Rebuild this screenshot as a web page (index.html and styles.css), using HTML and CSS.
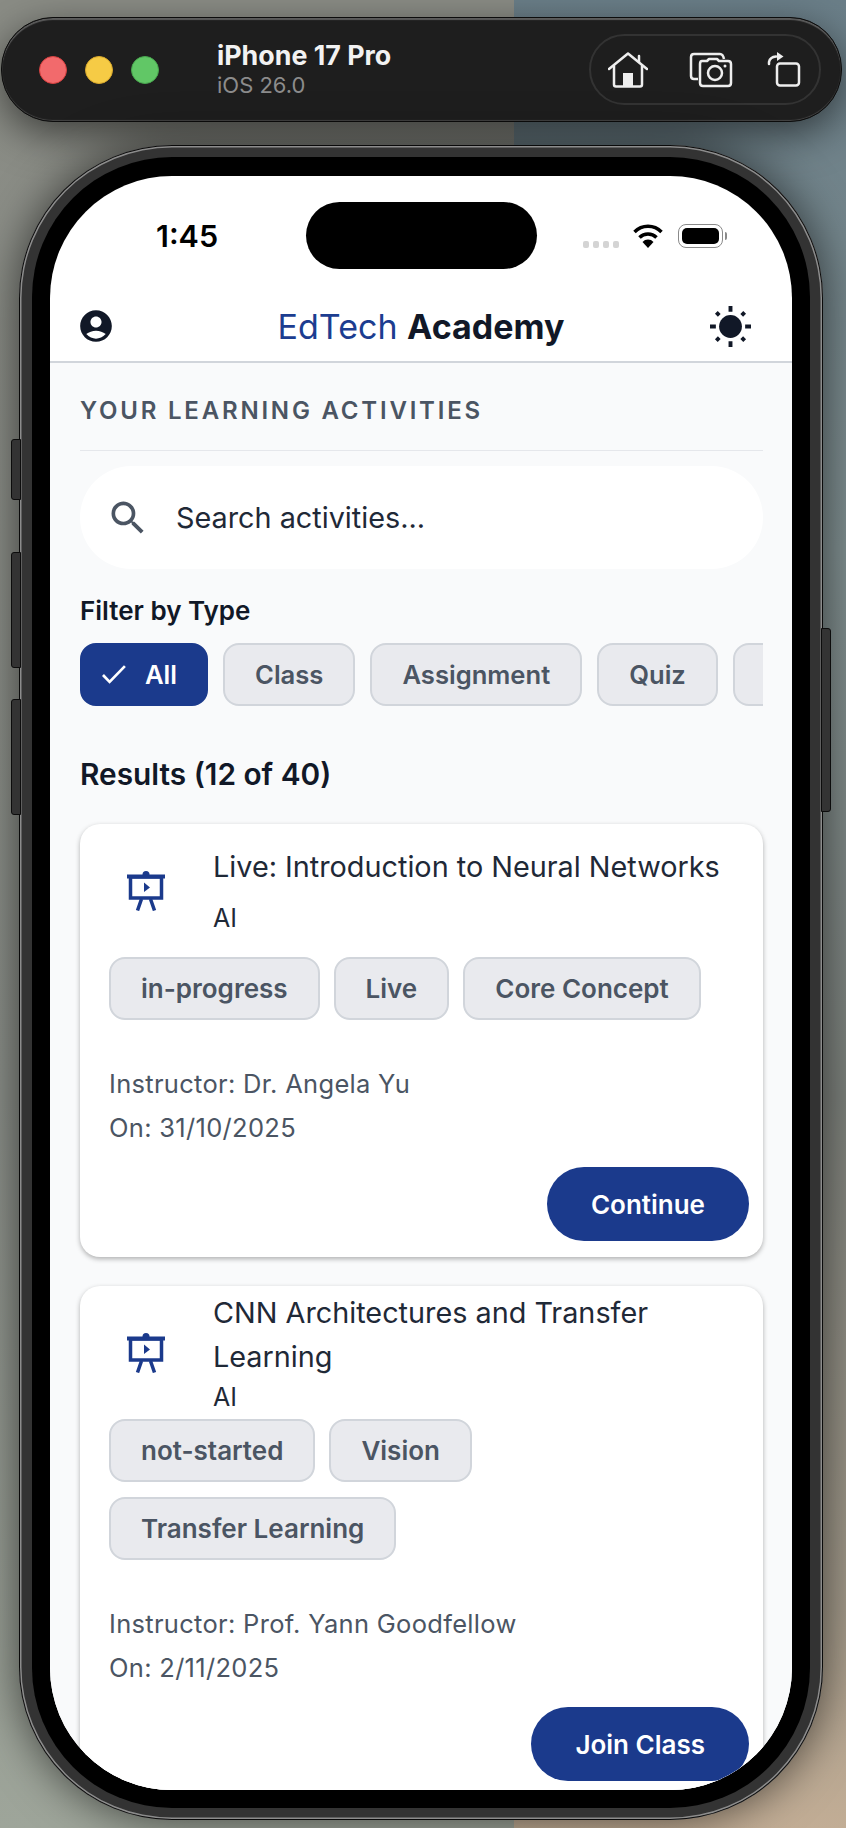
FILE: index.html
```html
<!DOCTYPE html>
<html lang="en">
<head>
	<meta charset="UTF-8">
	<title>EdTech Academy</title>
	<link rel="stylesheet" href="styles.css">
</head>
<body>
	<div class="toolbar">
		<div class="lights">
			<span class="light light-red"></span>
			<span class="light light-yellow"></span>
			<span class="light light-green"></span>
		</div>
		<div class="device">
			<div class="device-name">iPhone 17 Pro</div>
			<div class="device-os">iOS 26.0</div>
		</div>
		<div class="tools">
			<svg class="tool" width="40" height="36" viewBox="0 0 40 36" fill="none" stroke="#eee" stroke-width="2.5" stroke-linecap="round" stroke-linejoin="round">
				<path d="M1 17L20 1.500L39 17"/>
				<path d="M31 10V4"/>
				<path d="M6 14V32.500Q6 34.500 8 34.500H32Q34 34.500 34 32.500V14"/>
				<rect x="15" y="21" width="10" height="13" fill="#eee" stroke="none"/>
			</svg>
			<svg class="tool tool-camera" width="44" height="36" viewBox="0 0 44 36" fill="none" stroke="#eee" stroke-width="2.500" stroke-linejoin="round">
				<path d="M9 27H5Q2 27 2 24V5Q2 2 5 2H31Q34 2 35 7"/>
				<path d="M13 9H18L20 7H28L30 9H39Q42 9 42 12V31Q42 34 39 34H14Q11 34 11 31V12Q11 9 13 9Z" fill="#1e1e1e"/>
				<circle cx="26" cy="21" r="7"/>
				<circle cx="36" cy="14" r="1.500" fill="#eee" stroke="none"/>
			</svg>
			<svg class="tool" width="36" height="36" viewBox="0 0 36 36" fill="none" stroke="#eee" stroke-width="2.500" stroke-linecap="round" stroke-linejoin="round">
				<rect x="10" y="11.500" width="22" height="22" rx="3"/>
				<path d="M2 12V10Q3 5 9 4.500"/>
				<path d="M10 0L16.500 4.500L10 9Z" fill="#eee" stroke="none"/>
			</svg>
		</div>
	</div>

	<div class="phone">
		<span class="side-btn side-mute"></span>
		<span class="side-btn side-up"></span>
		<span class="side-btn side-down"></span>
		<span class="side-btn side-power"></span>
		<div class="bezel">
			<div class="screen">
				<div class="status">
					<div class="time">1:45</div>
					<div class="island"></div>
					<div class="status-icons">
						<div class="signal"><span></span><span></span><span></span><span></span></div>
						<svg width="30" height="24" viewBox="0 0 30 24" fill="none" stroke="#000" stroke-width="3.500">
							<path d="M1.500 8A19 19 0 0 1 28.500 8"/>
							<path d="M6.500 13.500A12 12 0 0 1 23.500 13.500"/>
							<path d="M15 24L9.500 18A7.500 7.500 0 0 1 20.500 18Z" fill="#000" stroke="none"/>
						</svg>
						<div class="battery"><span></span></div>
						<div class="battery-nub"></div>
					</div>
				</div>

				<div class="app-header">
					<svg class="account" width="38" height="38" viewBox="0 0 24 24" fill="#111827">
						<path d="M12 2C6.48 2 2 6.48 2 12s4.480 10 10 10 10-4.480 10-10S17.520 2 12 2zm0 4c1.930 0 3.500 1.570 3.500 3.500S13.930 13 12 13s-3.500-1.570-3.500-3.500S10.070 6 12 6zm0 14c-2.030 0-4.430-.820-6.140-2.880C7.550 15.800 9.680 15 12 15s4.450.800 6.140 2.120C16.430 19.180 14.030 20 12 20z"/>
					</svg>
					<div class="brand"><span class="brand-a">EdTech</span> <span class="brand-b">Academy</span></div>
					<svg class="sun" width="41" height="41" viewBox="0 0 42 42" fill="#111827" stroke="#111827" stroke-width="4">
						<circle cx="21" cy="21" r="11.700" stroke="none"/>
						<path d="M21 0V6M21 36V42M0 21H6M36 21H42M6.500 6.500L9.500 9.500M32.500 32.500L35.500 35.500M6.500 35.500L9.500 32.500M32.500 9.500L35.500 6.500"/>
					</svg>
				</div>

				<div class="content">
					<div class="section-title">YOUR LEARNING ACTIVITIES</div>
					<div class="search">
						<svg width="44" height="44" viewBox="0 0 24 24" fill="#4b5563">
							<path d="M15.500 14h-.790l-.280-.270C15.410 12.590 16 11.110 16 9.500 16 5.910 13.090 3 9.500 3S3 5.910 3 9.500 5.910 16 9.500 16c1.610 0 3.090-.590 4.230-1.570l.270.280v.790l5 4.990L20.490 19l-4.990-5zm-6 0C7.010 14 5 11.990 5 9.500S7.010 5 9.500 5 14 7.010 14 9.500 11.990 14 9.500 14z"/>
						</svg>
						<span>Search activities...</span>
					</div>

					<div class="filter-label">Filter by Type</div>
					<div class="filters">
						<div class="chip chip-on">
							<svg width="24" height="19" viewBox="3.400 5.500 17.700 13.600" fill="#fff" preserveAspectRatio="none">
								<path d="M9 16.170L4.830 12l-1.420 1.410L9 19 21 7l-1.410-1.410z"/>
							</svg>
							All
						</div>
						<div class="chip">Class</div>
						<div class="chip">Assignment</div>
						<div class="chip">Quiz</div>
						<div class="chip chip-more"></div>
					</div>

					<div class="results">Results (12 of 40)</div>

					<div class="card">
						<div class="card-head">
							<svg class="card-icon" width="38" height="40" viewBox="0 0 38 40" fill="none" stroke="#1b3a8c" stroke-width="3.500">
								<circle cx="19" cy="3.500" r="3.500" fill="#1b3a8c" stroke="none"/>
								<rect x="0" y="3.500" width="38" height="4" fill="#1b3a8c" stroke="none"/>
								<rect x="3.500" y="6" width="31" height="21"/>
								<path d="M17 11.500L23 16.500L17 21Z" fill="#1b3a8c" stroke="none"/>
								<path d="M14.500 28L10.500 39.500M23.500 28L27.500 39.500"/>
							</svg>
							<div class="card-text">
								<div class="card-title">Live: Introduction to Neural Networks</div>
								<div class="card-sub">AI</div>
							</div>
						</div>
						<div class="tags">
							<div class="chip">in-progress</div>
							<div class="chip">Live</div>
							<div class="chip">Core Concept</div>
						</div>
						<div class="meta">
							<div>Instructor: Dr. Angela Yu</div>
							<div>On: 31/10/2025</div>
						</div>
						<div class="card-actions">
							<button class="action">Continue</button>
						</div>
					</div>

					<div class="card">
						<div class="card-head">
							<svg class="card-icon" width="38" height="40" viewBox="0 0 38 40" fill="none" stroke="#1b3a8c" stroke-width="3.500">
								<circle cx="19" cy="3.500" r="3.500" fill="#1b3a8c" stroke="none"/>
								<rect x="0" y="3.500" width="38" height="4" fill="#1b3a8c" stroke="none"/>
								<rect x="3.500" y="6" width="31" height="21"/>
								<path d="M17 11.500L23 16.500L17 21Z" fill="#1b3a8c" stroke="none"/>
								<path d="M14.500 28L10.500 39.500M23.500 28L27.500 39.500"/>
							</svg>
							<div class="card-text">
								<div class="card-title">CNN Architectures and Transfer Learning</div>
								<div class="card-sub">AI</div>
							</div>
						</div>
						<div class="tags">
							<div class="chip">not-started</div>
							<div class="chip">Vision</div>
							<div class="chip">Transfer Learning</div>
						</div>
						<div class="meta">
							<div>Instructor: Prof. Yann Goodfellow</div>
							<div>On: 2/11/2025</div>
						</div>
						<div class="card-actions">
							<button class="action">Join Class</button>
						</div>
					</div>
				</div>
			</div>
		</div>
	</div>
</body>
</html>
```

FILE: styles.css
```css
* {
  box-sizing: border-box;
}
body {
  margin: 0;
  width: 846px;
  height: 1828px;
  overflow: hidden;
  padding: 17px 4px 0 1px;
  font-family: Inter, "Liberation Sans", sans-serif;
  background:
    linear-gradient(180deg, #8a8c85 0%, #8c908a 60%, #9ea59a 100%) 0 0 / 514px 100% no-repeat,
    linear-gradient(180deg, #6a7e88 0%, #7f8e8f 30%, #7d817c 60%, #a39a8a 88%, #c2ad95 100%);
}

/* simulator toolbar */
.toolbar {
  display: flex;
  align-items: center;
  height: 105px;
  padding: 0 20px 0 37px;
  background: #1e1e1e;
  border: 1px solid #0c0c0c;
  border-radius: 52px;
  box-shadow: inset 0 2px 1px #5c5c5c, inset 0 -1px 1px #444, 0 12px 40px rgba(0, 0, 0, 0.55);
}
.lights {
  display: flex;
  gap: 18px;
}
.light {
  width: 28px;
  height: 28px;
  border-radius: 50%;
}
.light-red {
  background: #f26a6c;
  border: 1px solid #d8403f;
}
.light-yellow {
  background: #f6cb45;
  border: 1px solid #d9a82c;
}
.light-green {
  background: #61c766;
  border: 1px solid #48a64e;
}
.device {
  margin-left: 58px;
}
.device-name {
  color: #f2f2f2;
  font-size: 26.800px;
  font-weight: 700;
  line-height: 30px;
}
.device-os {
  margin-top: 1px;
  color: #8c8c8c;
  font-size: 22px;
  line-height: 28px;
}
.tools {
  display: flex;
  align-items: center;
  gap: 34px;
  width: 232px;
  height: 71px;
  margin-left: auto;
  padding: 0 0 0 17px;
  border: 2px solid #333;
  border-radius: 36px;
}
.tool-camera {
  margin-left: 7px;
}

/* phone body */
.phone {
  position: relative;
  width: 804px;
  height: 1675px;
  margin: 23px 0 0 18px;
  padding: 12px 13px 12px 13px;
  background: #333;
  border-radius: 153px;
  box-shadow: inset 0 0 0 1px #0a0a0a, inset 0 0 0 2.5px #8c8c8c, 0 0 45px rgba(0, 0, 0, 0.6);
}
.side-btn {
  position: absolute;
  width: 10px;
  background: #333;
  border: 1px solid #0c0c0c;
  border-radius: 3px 0 0 3px;
}
.side-mute {
  left: -8px;
  top: 294px;
  height: 61px;
}
.side-up {
  left: -8px;
  top: 407px;
  height: 116px;
}
.side-down {
  left: -8px;
  top: 554px;
  height: 116px;
}
.side-power {
  right: -8px;
  top: 483px;
  height: 184px;
  border-radius: 0 3px 3px 0;
}
.bezel {
  height: 100%;
  padding: 19px 18px 18px 18px;
  background: #000;
  border-radius: 140px;
}
.screen {
  height: 100%;
  overflow: hidden;
  background: #fff;
  border-radius: 122px;
}

/* status bar */
.status {
  display: grid;
  grid-template-columns: 1fr 231px 1fr;
  height: 115px;
  padding-top: 26px;
}
.time {
  padding: 16px 0 0 106px;
  font-size: 30.500px;
  font-weight: 600;
  line-height: 36px;
  color: #000;
}
.island {
  height: 67px;
  background: #000;
  border-radius: 34px;
}
.status-icons {
  display: flex;
  align-items: flex-start;
  padding: 22px 0 0 46px;
}
.signal {
  display: flex;
  gap: 4px;
  margin: 17px 14px 0 0;
}
.signal span {
  width: 6px;
  height: 7px;
  background: #d4d4d4;
  border-radius: 2px;
}
.battery {
  width: 45px;
  height: 24px;
  margin-left: 15px;
  padding: 3px;
  border: 1.5px solid #8a8a8a;
  border-radius: 8px;
}
.battery span {
  display: block;
  height: 100%;
  background: #000;
  border-radius: 5px;
}
.battery-nub {
  width: 2px;
  height: 8px;
  margin: 8px 0 0 2px;
  background: #8a8a8a;
  border-radius: 0 2px 2px 0;
}

/* app header */
.app-header {
  display: grid;
  grid-template-columns: 1fr auto 1fr;
  align-items: center;
  height: 72px;
  padding: 0 41px;
  border-bottom: 2px solid #d1d5db;
}
.account {
  margin-left: -14px;
}
.brand {
  padding-top: 1px;
  font-size: 34px;
  line-height: 44px;
  color: #111827;
}
.brand-a {
  color: #1c3d90;
}
.brand-b {
  font-weight: 700;
}
.sun {
  justify-self: end;
}

/* page content */
.content {
  padding: 31px 29px 0 30px;
  background: #f9fafb;
}
.section-title {
  padding-bottom: 22px;
  font-size: 24px;
  font-weight: 600;
  line-height: 34px;
  letter-spacing: 2.800px;
  color: #4b5563;
  border-bottom: 1.500px solid #e5e7eb;
}
.search {
  display: flex;
  align-items: center;
  gap: 26px;
  height: 103px;
  margin-top: 15px;
  padding-left: 26px;
  background: #fff;
  border-radius: 52px;
  font-size: 28.800px;
  color: #1f2937;
}
.filter-label {
  margin-top: 27px;
  font-size: 26px;
  font-weight: 600;
  line-height: 30px;
  color: #111827;
}
.filters {
  display: flex;
  gap: 15px;
  margin-top: 17px;
  overflow: hidden;
}
.chip {
  display: flex;
  flex: none;
  align-items: center;
  height: 63px;
  padding: 0 30px;
  background: #e9eaee;
  border: 2px solid #d1d5db;
  border-radius: 16px;
  font-size: 26px;
  font-weight: 600;
  color: #4b5563;
}
.filters .chip {
  font-size: 25.600px;
}
.filters .chip-on {
  gap: 19px;
  padding: 0 29px 0 20px;
  background: #1b3a8c;
  border-color: #1b3a8c;
  color: #fff;
}
.chip-more {
  width: 100px;
}
.results {
  margin-top: 50px;
  font-size: 29.800px;
  font-weight: 600;
  line-height: 36px;
  color: #111827;
}

/* activity cards */
.card {
  margin-top: 32px;
  padding: 0 14px 16px 29px;
  background: #fff;
  border-radius: 20px;
  box-shadow: 0 2px 5px rgba(0, 0, 0, 0.3);
}
.card + .card {
  margin-top: 29px;
}
.card-head {
  display: flex;
  align-items: center;
  height: 133px;
}
.card-icon {
  flex: none;
  margin: 0 48px 0 18px;
}
.card-text {
  display: flex;
  flex-direction: column;
  justify-content: space-between;
  min-height: 91px;
  padding-right: 10px;
}
.card-title {
  font-size: 28.800px;
  line-height: 44px;
  color: #1f2937;
}
.card-sub {
  font-size: 25px;
  line-height: 36px;
  color: #1f2937;
}
.tags {
  display: flex;
  flex-wrap: wrap;
  gap: 15px 14px;
  padding-right: 17px;
}
.meta {
  margin-top: 42px;
  font-size: 25.500px;
  line-height: 44px;
  letter-spacing: 0.300px;
  color: #4b5563;
}
.card-actions {
  display: flex;
  justify-content: flex-end;
  margin-top: 17px;
}
.action {
  height: 74px;
  padding: 0 44px;
  background: #1b3a8c;
  border: 0;
  border-radius: 37px;
  font-family: inherit;
  font-size: 26px;
  font-weight: 600;
  color: #fff;
}
```
